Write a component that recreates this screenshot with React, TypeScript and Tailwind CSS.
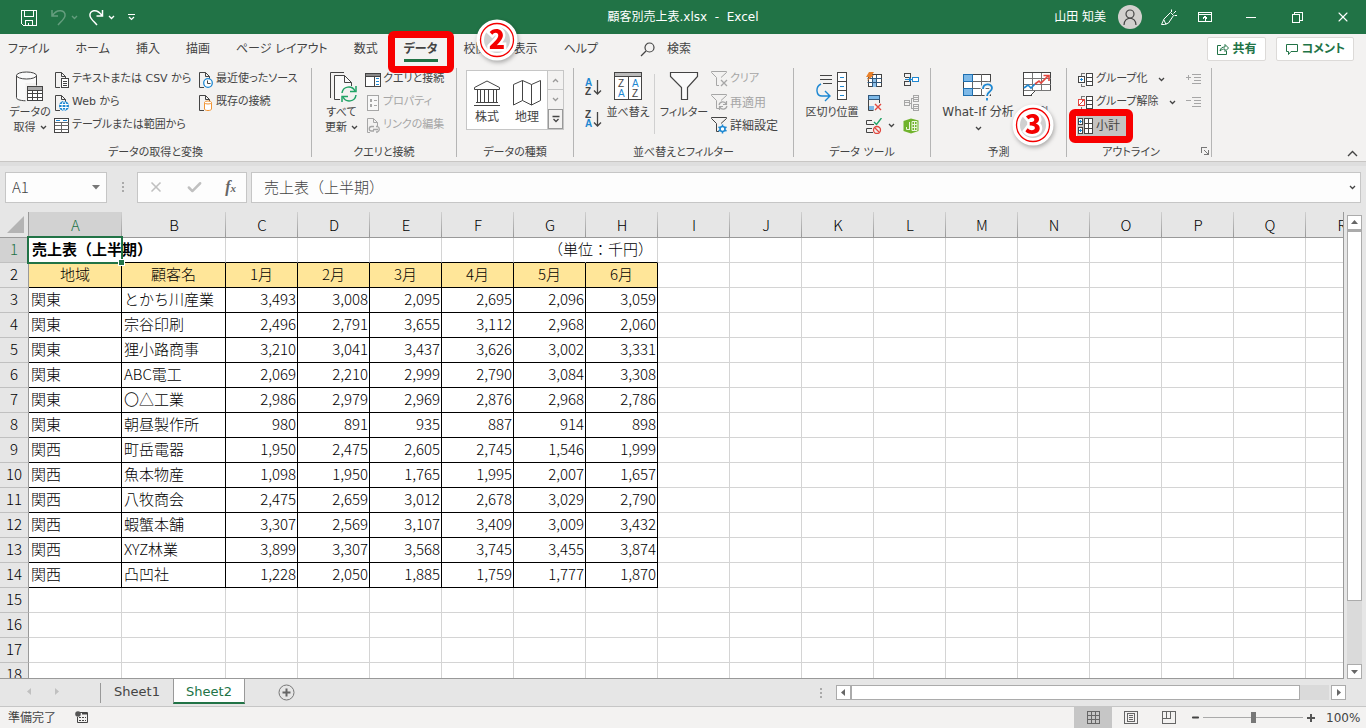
import { ReactNode, useState } from "react";
import { Check, Minus, User, X } from "lucide-react";

type Row = { area: string; client: string; values: number[] };

const rows: Row[] = [
  { area: "関東", client: "とかち川産業", values: [3493, 3008, 2095, 2695, 2096, 3059] },
  { area: "関東", client: "宗谷印刷", values: [2496, 2791, 3655, 3112, 2968, 2060] },
  { area: "関東", client: "狸小路商事", values: [3210, 3041, 3437, 3626, 3002, 3331] },
  { area: "関東", client: "ABC電工", values: [2069, 2210, 2999, 2790, 3084, 3308] },
  { area: "関東", client: "〇△工業", values: [2986, 2979, 2969, 2876, 2968, 2786] },
  { area: "関東", client: "朝昼製作所", values: [980, 891, 935, 887, 914, 898] },
  { area: "関西", client: "町岳電器", values: [1950, 2475, 2605, 2745, 1546, 1999] },
  { area: "関西", client: "魚本物産", values: [1098, 1950, 1765, 1995, 2007, 1657] },
  { area: "関西", client: "八牧商会", values: [2475, 2659, 3012, 2678, 3029, 2790] },
  { area: "関西", client: "蝦蟹本舗", values: [3307, 2569, 3107, 3409, 3009, 3432] },
  { area: "関西", client: "XYZ林業", values: [3899, 3307, 3568, 3745, 3455, 3874] },
  { area: "関西", client: "凸凹社", values: [1228, 2050, 1885, 1759, 1777, 1870] },
];

const headings = ["地域", "顧客名", "1月", "2月", "3月", "4月", "5月", "6月"];
const columns = "ABCDEFGHIJKLMNOPQR".split("");
const tabs = ["ファイル", "ホーム", "挿入", "描画", "ページ レイアウト", "数式", "データ", "校閲", "表示", "ヘルプ"];

const Svg = ({ w, h, children, smooth, className = "" }: { w: number; h: number; children: ReactNode; smooth?: boolean; className?: string }) => (
  <svg
    width={w}
    height={h}
    viewBox={`0 0 ${w} ${h}`}
    fill="none"
    stroke="#444"
    shapeRendering={smooth ? "auto" : "crispEdges"}
    className={`block shrink-0 ${className}`}
    aria-hidden="true"
  >
    {children}
  </svg>
);

const Chevron = ({ className = "" }: { className?: string }) => (
  <Svg w={7} h={5} smooth className={className}>
    <path d="M1 1l2.500 2.500L6 1" strokeWidth="1.300" />
  </Svg>
);

/* ---------- ribbon icons ---------- */

const Page = ({ color = "#444" }: { color?: string }) => (
  <path d="M6 15.500H1.500V.5h6l4 4V7M7.500.5v4h4" stroke={color} fill="none" />
);

const DatabaseIcon = () => (
  <Svg w={32} h={32} smooth>
    <path d="M2.500 4.500v22c0 2 3 3 9 3.300V12h12V4.500" fill="#fafafa" stroke="none" />
    <ellipse cx="12.500" cy="4.500" rx="10" ry="3.500" fill="#fafafa" />
    <path d="M2.500 4.500v22c0 2 3 3 9 3.300M22.500 4.500v10" />
    <g shapeRendering="crispEdges">
      <rect x="13.500" y="15.500" width="15" height="14" fill="#fff" />
      <rect x="14" y="16" width="14" height="3" fill="#aaa" stroke="none" />
      <path d="M13.500 19.500h15M13.500 22.500h15M13.500 26.500h15M18.500 19v11M23.500 19v11" />
    </g>
  </Svg>
);

const TextFileIcon = () => (
  <Svg w={16} h={16} smooth>
    <Page />
    <rect x="7.500" y="6.500" width="7" height="9" fill="#fff" />
    <path d="M9 9.500h4M9 11.500h4M9 13.500h4" />
  </Svg>
);

const WebIcon = () => (
  <Svg w={16} h={16} smooth>
    <Page />
    <circle cx="10" cy="11" r="5" fill="#1e88d2" stroke="none" />
    <path d="M5.500 9.500h9M5.500 12.500h9" stroke="#fff" />
    <ellipse cx="10" cy="11" rx="2" ry="4.500" stroke="#fff" />
  </Svg>
);

const TableRangeIcon = () => (
  <Svg w={16} h={16}>
    <rect x=".5" y=".5" width="14" height="14" fill="#fff" />
    <path d="M.5 4.500h14M.5 7.500h14M.5 11.500h14M7.500 4v11" stroke="#666" />
    <path d="M2 2.500h4M9 2.500h4" stroke="#1e88d2" />
  </Svg>
);

const RecentIcon = () => (
  <Svg w={16} h={16} smooth>
    <Page />
    <circle cx="10" cy="11" r="4.300" fill="#fff" stroke="#1e88d2" strokeWidth="1.300" />
    <path d="M9.500 8.500v3h3" />
  </Svg>
);

const ExistingIcon = () => (
  <Svg w={16} h={16} smooth>
    <Page />
    <path d="M6.500 7.500v6.500c0 2 7 2 7 0V7.500" fill="#fff" stroke="#f29432" />
    <ellipse cx="10" cy="7.500" rx="3.500" ry="1.500" fill="#fff" stroke="#f29432" />
  </Svg>
);

const RefreshIcon = () => (
  <Svg w={32} h={32} smooth>
    <path d="M4.500 27V1.500H18" />
    <path d="M14 28.500H8.500v-24h10l7 7V15" fill="#fafafa" />
    <path d="M18.500 4.500v7h7" />
    <circle cx="23" cy="23" r="8" fill="#f3f2f1" stroke="none" />
    <path d="M16 22c1-7 10-8 13-2M30 24c-1 7-10 8-13 2" stroke="#21a366" strokeWidth="1.500" />
    <path d="M30 15v5.500h-6M16 31v-5.500h6" stroke="#21a366" strokeWidth="1.500" />
  </Svg>
);

const QueriesIcon = () => (
  <Svg w={16} h={14}>
    <rect x=".5" y=".5" width="15" height="13" fill="#fff" />
    <rect x="1" y="1" width="14" height="2" fill="#888" stroke="none" />
    <path d="M.5 3.500h15M9.500 3v11" />
    <path d="M11 5.500h3M11 8.500h3M11 11.500h3" stroke="#1e88d2" />
  </Svg>
);

const PropertiesIcon = () => (
  <Svg w={16} h={16}>
    <rect x="2.500" y=".5" width="11" height="15" fill="#f8f8f8" stroke="#a6a6a6" />
    <path d="M5 5.500h2M5 10.500h2" strokeWidth="3" stroke="#a6a6a6" />
    <path d="M9 5.500h3M9 10.500h3" stroke="#a6a6a6" />
  </Svg>
);

const EditLinksIcon = () => (
  <Svg w={16} h={16} smooth>
    <path d="M5 14.500H2.500V.5h6l4 4V8M8.500.5v4h4" stroke="#a6a6a6" />
    <path d="M9 13H6.500a2 2 0 010-4.500H9M11 8.500h1.500a3 3 0 010 5.500H11M8 11.500h5" stroke="#a6a6a6" strokeWidth="1.300" />
  </Svg>
);

const StocksIcon = () => (
  <Svg w={28} h={28} smooth>
    <path d="M1.500 8.500L14 2l12.500 6.500v2h-25zM3 23.500h22M1 26.500h26" />
    <path d="M4.500 10.500v13M7.500 10.500v13M11.500 10.500v13M15.500 10.500v13M20.500 10.500v13M23.500 10.500v13" />
  </Svg>
);

const GeographyIcon = () => (
  <Svg w={28} h={28} smooth>
    <path d="M.5 5.500l9-4 9 4 9-4v20l-9 4.500-9-4.500-9 4.500zM9.500 1.500v20M18.500 5.500V26" />
  </Svg>
);

const SortIcon = ({ desc }: { desc?: boolean }) => (
  <Svg w={17} h={19} smooth>
    <g stroke="none" fontFamily="Liberation Sans" fontWeight="bold" fontSize="10">
      <text x="0" y="8" fill={desc ? "#444" : "#1e88d2"}>{desc ? "Z" : "A"}</text>
      <text x="0" y="17" fill={desc ? "#1e88d2" : "#444"}>{desc ? "A" : "Z"}</text>
    </g>
    <path d="M12.500 2v14M9 12.500l3.500 3.500 3.500-3.500" strokeWidth="1.300" />
  </Svg>
);

const SortDialogIcon = () => (
  <Svg w={32} h={32}>
    <rect x="2.500" y="1.500" width="27" height="27" fill="#fff" />
    <rect x="3" y="2" width="26" height="3" fill="#bbb" stroke="none" />
    <path d="M2.500 5.500h27M16.500 5v24" />
    <g stroke="none" fontFamily="Liberation Sans" fontSize="10">
      <text x="6" y="16" fill="#444">Z</text>
      <text x="6" y="26" fill="#1e88d2">A</text>
      <text x="20" y="16" fill="#1e88d2">A</text>
      <text x="20" y="26" fill="#444">Z</text>
    </g>
  </Svg>
);

const FilterIcon = () => (
  <Svg w={32} h={32} smooth>
    <path d="M2.500 1.500h27v4l-10 11v12h-6v-12l-11-11z" fill="#fafafa" strokeWidth="1.200" />
  </Svg>
);

const SmallFilter = ({ color }: { color: string }) => (
  <path d="M8 14.500H5.500v-8l-5-5v-1h15v1L10 6.500" stroke={color} />
);

const ClearIcon = () => (
  <Svg w={17} h={17} smooth>
    <SmallFilter color="#a6a6a6" />
    <path d="M10 9l6 6M16 9l-6 6" stroke="#a6a6a6" strokeWidth="1.300" />
  </Svg>
);

const ReapplyIcon = () => (
  <Svg w={17} h={17} smooth>
    <SmallFilter color="#a6a6a6" />
    <path d="M8 11c1-4 6-4 7-1M16 12c-1 4-6 4-7 1M15.500 7v3.500H12M8.500 16v-3.500H12" stroke="#a6a6a6" strokeWidth="1.200" />
  </Svg>
);

const AdvancedIcon = () => (
  <Svg w={17} h={17} smooth>
    <SmallFilter color="#444" />
    <circle cx="11.500" cy="12" r="2.500" fill="#fff" stroke="#1e88d2" strokeWidth="1.500" />
    <path d="M11.500 7.500v2M11.500 14.500v2M7.500 10l2 1M13.500 13l2 1M15.500 10l-2 1M9.500 13l-2 1" stroke="#1e88d2" strokeWidth="1.500" />
  </Svg>
);

const TextToColumnsIcon = () => (
  <Svg w={32} h={32} smooth>
    <g shapeRendering="crispEdges">
      <path d="M4 4.500h12M4 8.500h12M7 12.500h9" />
      <rect x="21.500" y="1.500" width="9" height="27" fill="#fff" />
      <path d="M21.500 10.500h9M21.500 19.500h9" />
      <path d="M24 6h4M24 15h4M24 24h4" stroke="#1e88d2" />
    </g>
    <path d="M5 13c-6 3-5 12 1 12h7M9 20l5 5-5 5" stroke="#1e88d2" strokeWidth="1.400" />
  </Svg>
);

const FlashFillIcon = () => (
  <Svg w={16} h={16} smooth>
    <rect x="2.500" y="2.500" width="13" height="12" fill="#fff" />
    <rect x="6" y="6" width="5" height="9" fill="#8cc0ea" stroke="none" />
    <path d="M1.500 6.500h14M1.500 10.500h14M6.500 3v12M10.500 3v12" stroke="#31587c" />
    <path d="M3 0h5L6 3h2L1 9l2-4H0z" fill="#e8812b" stroke="none" />
  </Svg>
);

const DuplicatesIcon = () => (
  <Svg w={16} h={16} smooth>
    <rect x="2.500" y=".5" width="11" height="4" fill="#7db9e8" stroke="#31587c" />
    <path d="M2.500 5v10.500h5M13.500 5v3" />
    <rect x="3" y="11" width="5" height="4" fill="#7db9e8" stroke="none" />
    <path d="M9 9l6 6M15 9l-6 6" stroke="#e2473f" strokeWidth="1.400" />
  </Svg>
);

const ValidationIcon = () => (
  <Svg w={16} h={16} smooth>
    <path d="M6 2.500H.5v4H8M6 10.500H.5v4H7" />
    <path d="M8 4l2.500 2.500L15.500 0" stroke="#21a366" strokeWidth="1.400" />
    <circle cx="11" cy="12" r="3.500" stroke="#e2473f" strokeWidth="1.300" />
    <path d="M8.500 9.500l5 5" stroke="#e2473f" strokeWidth="1.300" />
  </Svg>
);

const ConsolidateIcon = () => (
  <Svg w={17} h={16}>
    <path d="M1.500 5V1.500h6V5M1.500 9v4.500h6V9M1.500 5h6M1.500 9.500h6" />
    <path d="M2 7.500h6M6 5.500l2 2-2 2" stroke="#1e88d2" />
    <rect x="9.500" y="5.500" width="6" height="4" fill="#fff" stroke="#1e88d2" />
  </Svg>
);

const RelationIcon = () => (
  <Svg w={17} h={16}>
    <g stroke="#a6a6a6">
      <rect x="1.500" y="5.500" width="5" height="5" />
      <rect x="10.500" y=".5" width="5" height="6" />
      <rect x="10.500" y="9.500" width="5" height="6" />
      <path d="M2 7.500h4M11 2.500h4M11 11.500h4M11 4.500h4M11 13.500h4M7 8.500h2M8.500 3v10h2M8.500 3.500h2" />
    </g>
  </Svg>
);

const DataModelIcon = () => (
  <Svg w={17} h={16} smooth>
    <path d="M.5 3L8 .5l7.500 2V13L8 15.500.5 13z" fill="#70b32d" stroke="none" />
    <path d="M6.500 4v8M3.500 9v2.500h3M9 3.500h5v9H9zM9 6.500h5M9 9.500h5M11.500 3.500v9" stroke="#e9f5dc" />
  </Svg>
);

const WhatIfIcon = () => (
  <Svg w={34} h={32} smooth>
    <g shapeRendering="crispEdges">
      <rect x="2.500" y="3.500" width="27" height="21" fill="#fff" />
      <path d="M2.500 10.500h27M2.500 17.500h27M11.500 3v22M20.500 3v22" stroke="#666" />
      <rect x="2.500" y="3.500" width="9" height="7" fill="#7db9e8" stroke="#1e6fb0" />
      <rect x="2.500" y="17.500" width="9" height="7" fill="#7db9e8" stroke="#1e6fb0" />
    </g>
    <path d="M22 18c0-6 9-6 9-1 0 4-5 3.500-5 8" stroke="#f3f2f1" strokeWidth="5" />
    <path d="M22 18c0-6 9-6 9-1 0 4-5 3.500-5 8M26 27v2.500" stroke="#1e88d2" strokeWidth="1.800" />
  </Svg>
);

const ForecastIcon = () => (
  <Svg w={32} h={32} smooth>
    <g shapeRendering="crispEdges">
      <path d="M2.500 1.500h27v18H14l-4 5H2.500z" fill="#fff" />
      <path d="M2.500 7.500h27M2.500 13.500h27M2.500 19.500h27M11.500 1.500v18M20.500 1.500v18" stroke="#777" />
    </g>
    <path d="M3 17l4-3 3 3 4-4" stroke="#1e88d2" strokeWidth="1.600" />
    <path d="M14 13l4-3 2 2 7-7M22.500 4.500H28V10" stroke="#e2473f" strokeWidth="1.600" />
  </Svg>
);

const GroupIcon = ({ un }: { un?: boolean }) => (
  <Svg w={17} h={14}>
    <path d="M8 .5H4.500V3M8 13.500H4.500V11" stroke="#777" />
    <rect x="9.500" y=".5" width="6" height="12" fill="#fff" />
    <path d="M9.500 4.500h6M9.500 8.500h6" />
    <rect x="1.500" y="3.500" width="6" height="6" fill="#fff" stroke={un ? "#e2473f" : "#444"} />
    {un ? <path d="M2 9.500l5-6" stroke="#e2473f" /> : <path d="M3 6.500h3M4.500 5v3" stroke="#1e88d2" />}
  </Svg>
);

const SubtotalIcon = () => (
  <Svg w={17} h={17}>
    <rect x="7.500" y=".5" width="8" height="15" fill="#fff" />
    <path d="M7.500 5.500h8M7.500 10.500h8M11.500 0v16" />
    <rect x="1.500" y=".5" width="4" height="6" fill="#fff" />
    <rect x="1.500" y="9.500" width="4" height="6" fill="#fff" />
    <path d="M2 3.500h3M3.500 2v3M2 12.500h3M3.500 11v3" stroke="#1e88d2" />
  </Svg>
);

const DetailIcon = ({ plus }: { plus?: boolean }) => (
  <Svg w={16} h={13}>
    <path d="M0 4.500h5M6 1.500h9M8 4.500h7M8 7.500h7M6 10.500h9" stroke="#a6a6a6" />
    {plus ? <path d="M2.500 2v5" stroke="#a6a6a6" /> : null}
  </Svg>
);

/* ---------- ribbon parts ---------- */

const Group = ({ label, width, pad, children, launcher }: { label: string; width: string; pad: string; children: ReactNode; launcher?: boolean }) => (
  <section aria-label={label} className={`relative h-[89px] shrink-0 border-r border-[#b5b5b5] ${width}`}>
    <div className={`flex h-[69px] items-start ${pad}`}>{children}</div>
    <div className={`mt-2 text-center leading-4 ${launcher ? "pr-4" : ""}`}>{label}</div>
    {launcher ? (
      <button type="button" aria-label="アウトラインの設定" className="absolute right-0 bottom-0 p-0.5">
        <Svg w={8} h={8}>
          <path d="M.5 6V.5H6M3 3l4 4M7.500 3v4.500H3" stroke="#777" />
        </Svg>
      </button>
    ) : null}
  </section>
);

const Big = ({ icon, lines, arrow, className = "" }: { icon: ReactNode; lines: string[]; arrow?: boolean; className?: string }) => (
  <button type="button" className={`mt-[3px] flex shrink-0 flex-col items-center leading-[15px] whitespace-nowrap ${className}`}>
    <span className="mb-0.5">{icon}</span>
    {lines.map((line, i) => (
      <span key={line} className="flex items-center gap-1">
        {line}
        {arrow && i === 1 ? <Chevron /> : null}
      </span>
    ))}
    {arrow && lines.length === 1 ? <Chevron className="mt-1.5" /> : null}
  </button>
);

const Small = ({ icon, label, arrow, disabled, className = "" }: { icon: ReactNode; label: string; arrow?: boolean; disabled?: boolean; className?: string }) => (
  <button type="button" disabled={disabled} className={`flex h-[23px] items-center gap-0.5 whitespace-nowrap disabled:text-[#a6a6a6] ${className}`}>
    {icon}
    {label}
    {arrow ? <Chevron className="ml-2" /> : null}
  </button>
);

const IconButton = ({ label, children }: { label: string; children: ReactNode }) => (
  <button type="button" aria-label={label} className="flex h-[23px] items-center">
    {children}
  </button>
);

const Step = ({ n, className }: { n: number; className: string }) => (
  <svg width="46" height="46" viewBox="0 0 46 46" className={`pointer-events-none absolute z-20 drop-shadow-[1px_2px_2px_rgba(0,0,0,0.3)] ${className}`}>
    <circle cx="23" cy="23" r="18" fill="#d0d0d0" stroke="#fff" strokeWidth="5" />
    <circle cx="23" cy="23" r="14.500" fill="none" stroke="#fff" strokeWidth="3" />
    <circle cx="23" cy="23" r="16.500" fill="none" stroke="#f40000" strokeWidth="1.300" />
    <text
      x="23"
      y="32"
      textAnchor="middle"
      fontFamily="'Noto Sans CJK JP', sans-serif"
      fontWeight="900"
      fontSize="27"
      fill="#f40000"
      stroke="#fff"
      strokeWidth="5"
      paintOrder="stroke"
    >
      {n}
    </text>
  </svg>
);

const TitleBar = () => (
  <header className="flex h-[34px] shrink-0 items-center bg-[#217346] text-white">
    <div className="flex flex-1 items-center">
      <button type="button" aria-label="上書き保存" className="ml-5">
        <Svg w={17} h={17} className="stroke-white">
          <path d="M1.500 1.500h15v15h-13l-2-2zM4.500 1.500v6h9v-6M5.500 16.500v-5h7v5M8.500 14v3" />
        </Svg>
      </button>
      <button type="button" aria-label="元に戻す" disabled className="ml-3.5 flex items-center gap-1 opacity-30">
        <Svg w={16} h={17} smooth className="stroke-white">
          <path d="M1 1v6h6M1.500 6.500C6-1 15 1 14 7c-.5 3-4 5.500-7 9" strokeWidth="1.500" />
        </Svg>
        <Chevron className="stroke-white" />
      </button>
      <button type="button" aria-label="やり直し" className="ml-2.5 flex items-center gap-1">
        <Svg w={16} h={17} smooth className="stroke-white">
          <path d="M14.500 1v6h-6M14 6.500C9-1 1 1 2 7c.5 3 4 5.500 7 9" strokeWidth="1.500" />
        </Svg>
        <Chevron className="stroke-white" />
      </button>
      <button type="button" aria-label="クイック アクセス ツール バーのカスタマイズ" className="ml-3">
        <Svg w={9} h={8} smooth className="stroke-white">
          <path d="M1 1.500h7M2 4l2.500 2.500L7 4" strokeWidth="1.200" />
        </Svg>
      </button>
    </div>
    <h1 className="whitespace-pre">顧客別売上表.xlsx  -  Excel</h1>
    <div className="flex flex-1 items-center justify-end">
      <span>山田 知美</span>
      <span className="ml-3 flex size-6 items-center justify-center rounded-full bg-[#d2d0ce] text-[#444]">
        <Svg w={16} h={18} smooth>
          <circle cx="8" cy="6" r="4" strokeWidth="1.200" />
          <path d="M2 17c0-9 12-9 12 0" strokeWidth="1.200" />
        </Svg>
      </span>
      <button type="button" aria-label="描画モード" className="ml-3 flex w-7 justify-center">
        <Svg w={17} h={17} smooth className="stroke-white">
          <path d="M1.500 15.500L4 10l6.500-6.500 3 3L8.500 14l-4 1.500zM6 15.500L4 11M11.500 3V.5M13.500 4.500L16 2M14.500 6.500H17" />
        </Svg>
      </button>
      <button type="button" aria-label="リボンの表示オプション" className="flex w-[46px] justify-center">
        <Svg w={14} h={12} className="stroke-white">
          <path d="M.5 1.500h13v9H.5zM.5 3.500h13M7 10V6M5 7.500l2-2 2 2" />
        </Svg>
      </button>
      <button type="button" aria-label="最小化" className="flex w-[46px] justify-center">
        <Svg w={11} h={3} className="stroke-white">
          <path d="M0 1.500h10" />
        </Svg>
      </button>
      <button type="button" aria-label="元に戻す (縮小)" className="flex w-[46px] justify-center">
        <Svg w={11} h={11} className="stroke-white">
          <path d="M.5 2.500h7v8h-7zM2.500 2V.5h8v8H8" />
        </Svg>
      </button>
      <button type="button" aria-label="閉じる" className="flex w-[46px] justify-center">
        <X size={16} strokeWidth={1.600} />
      </button>
    </div>
  </header>
);

const TabBar = () => (
  <nav className="flex h-[34px] items-center gap-[26px] bg-[#f3f2f1] pb-1 pl-2 whitespace-nowrap">
    {tabs.map((tab) => (
      <div key={tab} className="relative">
        <button type="button" className={tab === "データ" ? "border-b-3 border-[#217346] pt-[3px] leading-5 font-bold" : "leading-5"}>
          {tab}
        </button>
        {tab === "データ" ? <span className="pointer-events-none absolute -inset-x-4 -top-[5px] -bottom-[11px] z-10 rounded-md border-7 border-[#f80000]" /> : null}
        {tab === "校閲" ? <Step n={2} className="-top-[22px] left-2.5" /> : null}
      </div>
    ))}
    <label className="ml-4 flex items-center gap-3">
      <Svg w={15} h={15} smooth>
        <circle cx="9.500" cy="5.500" r="4.500" strokeWidth="1.200" />
        <path d="M6 9l-5 5" strokeWidth="1.300" />
      </Svg>
      <input type="text" aria-label="検索" placeholder="検索" className="w-24 bg-transparent outline-none placeholder:text-[#444]" />
    </label>
    <div className="mr-3 ml-auto flex gap-2.5 font-bold text-[#217346]">
      <button type="button" className="flex h-6 items-center gap-1 rounded-xs border border-[#dcdad8] bg-white px-2">
        <Svg w={13} h={13} smooth className="stroke-[#217346]">
          <path d="M5 2.500H1.500v9h9V8M4 8c.5-3 2-4 5-4V1.500L12.500 5 9 8.500V6C7 6 5.500 6.500 4 8z" />
        </Svg>
        共有
      </button>
      <button type="button" className="flex h-6 items-center gap-1 rounded-xs border border-[#dcdad8] bg-white px-2">
        <Svg w={13} h={13} smooth className="stroke-[#217346]">
          <path d="M1.500 1.500h11v7H6l-2.500 3v-3h-2z" />
        </Svg>
        コメント
      </button>
    </div>
  </nav>
);

const Ribbon = () => (
  <div className="relative flex h-[94px] shrink-0 border-b border-[#c8c6c4] bg-[#f3f2f1] text-[11px]">
    <Group label="データの取得と変換" width="w-[312px]" pad="pl-1.5">
      <Big icon={<DatabaseIcon />} lines={["データの", "取得"]} arrow className="w-12" />
      <div>
        <Small icon={<TextFileIcon />} label="テキストまたは CSV から" />
        <Small icon={<WebIcon />} label="Web から" />
        <Small icon={<TableRangeIcon />} label="テーブルまたは範囲から" />
      </div>
      <div className="ml-auto w-[113px]">
        <Small icon={<RecentIcon />} label="最近使ったソース" />
        <Small icon={<ExistingIcon />} label="既存の接続" />
      </div>
    </Group>
    <Group label="クエリと接続" width="w-[145px]" pad="pl-1.5">
      <Big icon={<RefreshIcon />} lines={["すべて", "更新"]} arrow className="w-[47px]" />
      <div>
        <Small icon={<QueriesIcon />} label="クエリと接続" />
        <Small icon={<PropertiesIcon />} label="プロパティ" disabled />
        <Small icon={<EditLinksIcon />} label="リンクの編集" disabled />
      </div>
    </Group>
    <Group label="データの種類" width="w-[117px]" pad="pl-[9px]">
      <div className="mt-0.5 flex h-[60px] border border-[#c6c6c6] bg-white text-xs">
        <button type="button" className="flex w-10 flex-col items-center pt-2 leading-5">
          <StocksIcon />
          株式
        </button>
        <button type="button" className="flex w-10 flex-col items-center pt-2 leading-5">
          <GeographyIcon />
          地理
        </button>
        <div className="flex w-4 flex-col border-l border-[#c6c6c6] bg-[#f3f2f1]">
          <button type="button" aria-label="前の行" className="flex flex-1 items-center justify-center border-b border-[#c6c6c6]">
            <Chevron className="rotate-180 opacity-50" />
          </button>
          <button type="button" aria-label="次の行" className="flex flex-1 items-center justify-center">
            <Chevron className="opacity-50" />
          </button>
          <button type="button" aria-label="その他" className="flex flex-1 items-center justify-center border border-[#999]">
            <Svg w={8} h={8} smooth>
              <path d="M.5 1.500h7M1.500 4L4 6.500 6.500 4" strokeWidth="1.300" />
            </Svg>
          </button>
        </div>
      </div>
    </Group>
    <Group label="並べ替えとフィルター" width="w-[220px]" pad="pl-[11px]">
      <div className="mt-2.5 flex flex-col gap-[13px]">
        <button type="button" aria-label="昇順">
          <SortIcon />
        </button>
        <button type="button" aria-label="降順">
          <SortIcon desc />
        </button>
      </div>
      <Big icon={<SortDialogIcon />} lines={["並べ替え"]} className="ml-px w-[50px]" />
      <div className="mx-px mt-1.5 h-[60px] w-px bg-[#d0d0d0]" />
      <Big icon={<FilterIcon />} lines={["フィルター"]} className="ml-px w-[54px]" />
      <div>
        <Small icon={<ClearIcon />} label="クリア" disabled />
        <Small icon={<ReapplyIcon />} label="再適用" disabled className="text-xs" />
        <Small icon={<AdvancedIcon />} label="詳細設定" className="text-xs" />
      </div>
    </Group>
    <Group label="データ ツール" width="w-[137px]" pad="pl-2">
      <Big icon={<TextToColumnsIcon />} lines={["区切り位置"]} className="w-[60px]" />
      <div className="ml-1">
        <IconButton label="フラッシュ フィル">
          <FlashFillIcon />
        </IconButton>
        <IconButton label="重複の削除">
          <DuplicatesIcon />
        </IconButton>
        <button type="button" aria-label="データの入力規則" className="flex h-[23px] items-center gap-1.5">
          <ValidationIcon />
          <Chevron />
        </button>
      </div>
      <div className="ml-2">
        <IconButton label="統合">
          <ConsolidateIcon />
        </IconButton>
        <IconButton label="リレーションシップ">
          <RelationIcon />
        </IconButton>
        <IconButton label="データ モデルの管理">
          <DataModelIcon />
        </IconButton>
      </div>
    </Group>
    <Group label="予測" width="w-[136px]" pad="pl-2">
      <Big icon={<WhatIfIcon />} lines={["What-If 分析"]} arrow className="w-[78px] text-xs" />
      <div className="relative">
        <Big icon={<ForecastIcon />} lines={["予測", "シート"]} className="w-10" />
        <Step n={3} className="top-[34px] -left-[7px]" />
      </div>
    </Group>
    <Group label="アウトライン" width="w-[145px]" pad="pl-2.5" launcher>
      <div className="w-[109px]">
        <Small icon={<GroupIcon />} label="グループ化" arrow />
        <Small icon={<GroupIcon un />} label="グループ解除" arrow />
        <div className="relative mt-0.5 flex">
          <button type="button" className="flex h-5 items-center gap-0.5 bg-[#c5c3c1] pr-1.5 text-xs">
            <SubtotalIcon />
            小計
            <span className="pointer-events-none absolute -top-[7px] -left-2 h-[34px] w-16 rounded-md border-7 border-[#f80000]" />
          </button>
        </div>
      </div>
      <div>
        <IconButton label="詳細データの表示">
          <DetailIcon plus />
        </IconButton>
        <IconButton label="詳細を表示しない">
          <DetailIcon />
        </IconButton>
      </div>
    </Group>
    <button type="button" aria-label="リボンを折りたたむ" className="mt-auto mr-2 mb-1 ml-auto">
      <Svg w={11} h={7} smooth>
        <path d="M1 6l4.500-4.500L10 6" strokeWidth="1.400" />
      </Svg>
    </button>
  </div>
);

const FormulaBar = ({ cell, value, onChange }: { cell: string; value: string; onChange: (v: string) => void }) => (
  <div className="flex h-[50px] shrink-0 items-center border-t-4 border-[#dedede] bg-[#e6e6e6] px-[5px] pb-1 font-['Noto_Sans_CJK_JP',sans-serif] text-[#444]">
    <div className="flex h-[31px] w-[102px] items-center border border-[#c6c6c6] bg-[#fdfdfd] pr-1.5 pl-1.5">
      <input aria-label="名前ボックス" defaultValue={cell} className="w-0 flex-1 bg-transparent text-[15px] font-light outline-none" />
      <Svg w={8} h={5} smooth>
        <path d="M0 0h8L4 4.500z" fill="#777" stroke="none" />
      </Svg>
    </div>
    <Svg w={30} h={12}>
      <path d="M15.500 1v2M15.500 5v2M15.500 9v2" stroke="#aaa" strokeWidth="2" />
    </Svg>
    <div className="mr-1 flex h-[31px] w-[110px] items-center justify-between border border-[#c6c6c6] bg-[#fdfdfd] px-2.5 text-[#c0c0c0]">
      <button type="button" aria-label="キャンセル">
        <X size={16} strokeWidth={2.500} />
      </button>
      <button type="button" aria-label="入力">
        <Check size={17} strokeWidth={3.500} />
      </button>
      <button type="button" aria-label="関数の挿入" className="font-['Liberation_Serif',serif] text-base font-bold text-[#666] italic">
        f<span className="text-[11px]">x</span>
      </button>
    </div>
    <div className="flex h-[31px] flex-1 items-center border border-[#c6c6c6] bg-[#fdfdfd] pr-1 pl-3">
      <input aria-label="数式バー" value={value} onChange={(e) => onChange(e.target.value)} className="flex-1 bg-transparent text-[15px] font-light outline-none" />
      <Chevron />
    </div>
  </div>
);

const bodyCell = "border-r border-b border-black pt-0 pb-0.5";
const emptyCell = "border-r border-b border-[#d4d4d4]";

const Grid = ({ title }: { title: string }) => (
  <div className="min-w-0 flex-1 overflow-hidden border-r border-b border-[#999] bg-white font-['Noto_Sans_CJK_JP',sans-serif] text-[15px] leading-[22px] font-light text-black">
    <table className="w-[1378px] table-fixed border-separate border-spacing-0 whitespace-nowrap">
      <colgroup>
        <col className="w-[29px]" />
        <col className="w-[93px]" />
        <col className="w-[104px]" />
        {columns.slice(2).map((c) => (
          <col key={c} className="w-[72px]" />
        ))}
      </colgroup>
      <thead>
        <tr className="h-[26px] bg-[#e6e6e6]">
          <th aria-label="すべて選択" className="border-r border-b border-[#999] p-0">
            <Svg w={18} h={18} smooth className="mr-[3px] ml-auto">
              <path d="M17 0v17H0z" fill="#b4b4b4" stroke="none" />
            </Svg>
          </th>
          {columns.map((c) => (
            <th
              key={c}
              scope="col"
              className={`border-b border-[#999] bg-[linear-gradient(to_bottom,#d0d0d0,#999)] bg-[length:1px_100%] bg-right bg-no-repeat p-0 font-light ${c === "A" ? "bg-[#d2d2d2] text-[#217346]" : ""}`}
            >
              {c}
            </th>
          ))}
        </tr>
      </thead>
      <tbody>
        {Array.from({ length: 18 }, (_, r) => (
          <tr key={r} className="h-[25px]">
            <th
              scope="row"
              className={`border-r border-b border-r-[#999] border-b-[#c0c0c0] pt-0 pb-0.5 font-light ${r === 0 ? "bg-[#d2d2d2] text-[#217346]" : "bg-[#e6e6e6]"}`}
            >
              {r + 1}
            </th>
            {columns.map((c, i) => {
              const row = rows[r - 2];
              if (r === 0) {
                if (c === "A") {
                  return (
                    <td key={c} className="relative border-r border-b border-r-[#d4d4d4] border-b-black pt-0 pb-0.5 pl-[3px] font-bold">
                      {title}
                      <span className="absolute -inset-0.5 border-2 border-[#217346]" />
                      <span className="absolute -right-[3px] -bottom-[3px] size-[5px] bg-[#217346] outline outline-white" />
                    </td>
                  );
                }
                return (
                  <td
                    key={c}
                    className={`border-r border-b pt-0 pb-0.5 ${i < 8 ? "border-b-black" : "border-b-[#d4d4d4]"} ${c === "G" ? "border-r-transparent" : "border-r-[#d4d4d4]"}`}
                  >
                    {c === "H" ? <div className="flex justify-end pr-1">（単位：千円）</div> : null}
                  </td>
                );
              }
              if (r === 1 && i < 8) {
                return (
                  <td key={c} className={`${bodyCell} bg-[#ffe699] text-center`}>
                    {headings[i]}
                  </td>
                );
              }
              if (row && i < 8) {
                return (
                  <td key={c} className={`${bodyCell} ${i > 1 ? "pr-px text-right" : "pl-0.5"}`}>
                    {i === 0 ? row.area : i === 1 ? row.client : row.values[i - 2].toLocaleString("en-US")}
                  </td>
                );
              }
              return <td key={c} className={emptyCell} />;
            })}
          </tr>
        ))}
      </tbody>
    </table>
  </div>
);

const ScrollArrow = ({ d, label }: { d: string; label: string }) => (
  <button type="button" aria-label={label} className="flex size-[15px] shrink-0 items-center justify-center border border-[#ababab] bg-white">
    <Svg w={7} h={7} smooth>
      <path d={d} fill="#666" stroke="none" />
    </Svg>
  </button>
);

export default function App() {
  const [value, setValue] = useState("売上表（上半期）");
  const [sheet, setSheet] = useState("Sheet2");
  const [zoom, setZoom] = useState(100);

  return (
    <div className="flex h-screen flex-col overflow-hidden bg-[#e6e6e6] font-['DejaVu_Sans','Noto_Sans_CJK_JP',sans-serif] text-xs text-[#444]">
      <div className="shrink-0 [font-feature-settings:'palt']">
        <TitleBar />
        <TabBar />
        <Ribbon />
      </div>
      <FormulaBar cell="A1" value={value} onChange={setValue} />
      <main className="flex min-h-0 flex-1">
        <Grid title={value} />
        <div className="mt-[3px] mr-1 ml-[3px] flex w-[15px] flex-col bg-[#dadada]">
          <ScrollArrow d="M0 5l3.500-4L7 5z" label="上へスクロール" />
          <div className="h-4/5 border border-t-2 border-[#ababab] bg-white" />
          <div className="mt-auto">
            <ScrollArrow d="M0 2l3.500 4L7 2z" label="下へスクロール" />
          </div>
        </div>
      </main>
      <div className="flex h-7 shrink-0 items-start border-b border-[#c6c6c6]">
        <div className="mt-2 flex w-[100px] gap-5 pl-[26px]">
          <button type="button" aria-label="前のシート">
            <Svg w={7} h={9} smooth>
              <path d="M5 1v7L1 4.500z" fill="#c0c0c0" stroke="none" />
            </Svg>
          </button>
          <button type="button" aria-label="次のシート">
            <Svg w={7} h={9} smooth>
              <path d="M2 1v7l4-3.500z" fill="#c0c0c0" stroke="none" />
            </Svg>
          </button>
        </div>
        <div className="mt-1 h-5 w-px bg-[#999]" />
        {["Sheet1", "Sheet2"].map((s) => (
          <button
            key={s}
            type="button"
            onClick={() => setSheet(s)}
            className={`h-[25px] w-[72px] text-[13px] ${sheet === s ? "border-x border-b-2 border-x-[#999] border-b-[#217346] bg-white pt-0.5 text-[#217346]" : ""}`}
          >
            {s}
          </button>
        ))}
        <button type="button" aria-label="新しいシート" className="mt-[5px] ml-[33px]">
          <Svg w={17} h={17} smooth>
            <circle cx="8.500" cy="8.500" r="7.500" stroke="#777" />
            <path d="M8.500 4.500v8M4.500 8.500h8" stroke="#666" strokeWidth="2" />
          </Svg>
        </button>
        <div className="mt-1.5 mr-5 ml-auto flex w-[530px] items-center">
          <Svg w={20} h={12}>
            <path d="M4.500 1v2M4.500 5v2M4.500 9v2" stroke="#aaa" strokeWidth="2" />
          </Svg>
          <ScrollArrow d="M5 0L1 3.500 5 7z" label="左へスクロール" />
          <div className="mr-0.5 flex h-[15px] flex-1 bg-[#dadada]">
            <div className="w-[94%] border border-[#ababab] bg-white" />
          </div>
          <ScrollArrow d="M2 0l4 3.500L2 7z" label="右へスクロール" />
        </div>
      </div>
      <footer className="flex h-[21px] shrink-0 items-center bg-[#f3f2f1] pl-2">
        <span>準備完了</span>
        <button type="button" aria-label="マクロの記録" className="ml-[19px]">
          <Svg w={14} h={13} smooth>
            <path d="M5 1.500h7.500v10h-10V6" />
            <path d="M7 2.500h5" strokeWidth="2" />
            <path d="M4 6.500h2M7 6.500h2M10 6.500h1M4 9.500h2M7 9.500h2M10 9.500h1" />
            <circle cx="3" cy="3" r="2.800" fill="#555" stroke="none" />
          </Svg>
        </button>
        <div className="mr-[5px] ml-auto flex items-center">
          <button type="button" aria-label="標準" className="flex h-[21px] w-[38px] items-center justify-center bg-[#c6c6c6]">
            <Svg w={13} h={13}>
              <path d="M.5.5h12v12H.5zM.5 4.500h12M.5 8.500h12M4.500 0v13M8.500 0v13" stroke="#666" />
            </Svg>
          </button>
          <button type="button" aria-label="ページ レイアウト" className="flex w-[38px] justify-center">
            <Svg w={14} h={13}>
              <path d="M.5.5h13v12H.5zM3.500 2.500h7v8h-7zM5 4.500h4M5 6.500h4M5 8.500h4" stroke="#666" />
            </Svg>
          </button>
          <button type="button" aria-label="改ページ プレビュー" className="flex w-[38px] justify-center">
            <Svg w={14} h={13}>
              <path d="M.5.5h13v12H.5zM.5 7.500h8v-7M4.500.5v7" stroke="#666" />
            </Svg>
          </button>
          <button type="button" aria-label="縮小" className="flex w-3.5 justify-center" onClick={() => setZoom(zoom - 10)}>
            <Minus size={9} strokeWidth={5} />
          </button>
          <input
            type="range"
            aria-label="ズーム"
            min={10}
            max={190}
            value={zoom}
            onChange={(e) => setZoom(Number(e.target.value))}
            className="mx-px h-3 w-[100px] appearance-none bg-[linear-gradient(#aaa,#aaa)] bg-[length:100%_1px] bg-center bg-no-repeat [&::-webkit-slider-thumb]:h-[11px] [&::-webkit-slider-thumb]:w-[5px] [&::-webkit-slider-thumb]:appearance-none [&::-webkit-slider-thumb]:bg-[#777]"
          />
          <button type="button" aria-label="拡大" className="flex w-3.5 justify-center" onClick={() => setZoom(zoom + 10)}>
            <Svg w={8} h={8}>
              <path d="M4 0v8M0 4h8" stroke="#555" strokeWidth="2" />
            </Svg>
          </button>
          <span className="ml-2 w-[35px]">{zoom}%</span>
        </div>
      </footer>
    </div>
  );
}
